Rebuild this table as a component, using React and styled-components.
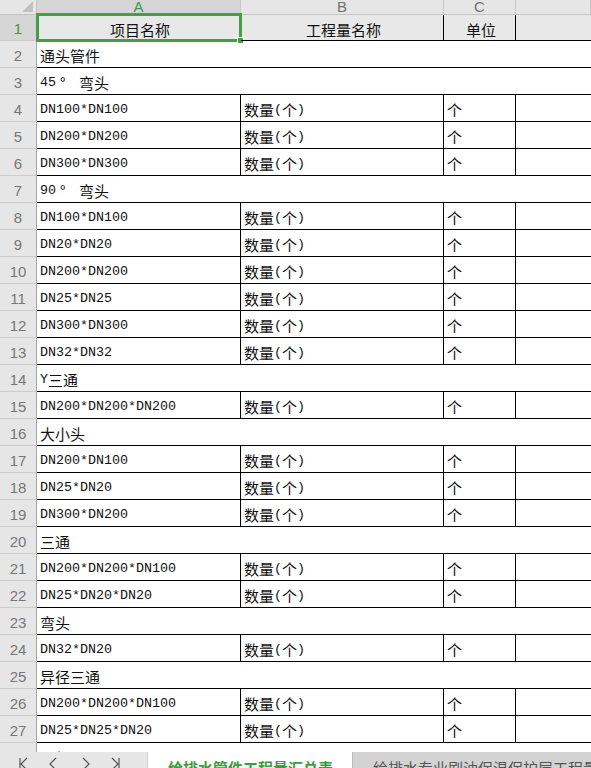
import React from "react";
import styled, { createGlobalStyle } from "styled-components";

const GlobalStyle = createGlobalStyle`
  html, body {
    margin: 0;
    padding: 0;
    background: #ffffff;
  }
`;

const COLS = "37px 204px 203px 72px 1fr";

const Page = styled.div`
  width: 591px;
  height: 768px;
  overflow: hidden;
  display: flex;
  flex-direction: column;
  background: #ffffff;
`;

const Sheet = styled.div`
  flex: 0 0 752px;
  overflow: hidden;
`;

const HeaderRow = styled.div`
  display: grid;
  grid-template-columns: ${COLS};
  height: 15px;
  box-sizing: border-box;
  background: #e6e6e6;
  border-bottom: 1px solid #c4c4c4;
`;

const Corner = styled.div`
  position: relative;
  border-right: 1px solid #c4c4c4;

  &::after {
    content: "";
    position: absolute;
    right: 3px;
    bottom: 2px;
    border-style: solid;
    border-width: 0 0 11px 11px;
    border-color: transparent transparent #c2c2c2 transparent;
  }
`;

const ColLabel = styled.div`
  font-family: "Liberation Sans", Arial, sans-serif;
  font-size: 15px;
  line-height: 13px;
  text-align: center;
  color: ${(p) => (p.active ? "#3c9a40" : "#707070")};
  background: ${(p) => (p.active ? "#d6d6d6" : "transparent")};
  border-right: 1px solid #c8c8c8;
  overflow: hidden;
`;

const Row = styled.div`
  display: grid;
  grid-template-columns: ${COLS};
  height: ${(p) => p.h}px;
  background: ${(p) => (p.head ? "#e8e8e8" : "#ffffff")};
`;

const RowNum = styled.div`
  display: flex;
  align-items: center;
  justify-content: center;
  padding-top: 2px;
  box-sizing: border-box;
  font-family: "Liberation Sans", Arial, sans-serif;
  font-size: 15px;
  color: ${(p) => (p.active ? "#3c9a40" : "#777777")};
  background: ${(p) => (p.active ? "#d6d6d6" : "#e6e6e6")};
  border-right: 1px solid #a8a8a8;
  border-bottom: 1px solid #cdcdcd;
`;

const Cell = styled.div`
  position: relative;
  display: flex;
  align-items: center;
  justify-content: ${(p) => (p.center ? "center" : "flex-start")};
  padding: 3px 0 0 3px;
  box-sizing: border-box;
  grid-column: ${(p) => (p.span ? `span ${p.span}` : "auto")};
  font-family: "Noto Sans CJK SC", sans-serif;
  font-size: 15px;
  color: #111111;
  white-space: pre;
  overflow: visible;
  border-bottom: 1px solid #000000;
  border-right: ${(p) => (p.edge ? "1px solid #000000" : "none")};
`;

const Selection = styled.div`
  position: absolute;
  left: -1px;
  top: -2px;
  right: -2px;
  bottom: -2px;
  border: 3px solid #43a047;
  pointer-events: none;

  &::after {
    content: "";
    position: absolute;
    right: -5px;
    bottom: -5px;
    width: 5px;
    height: 5px;
    background: #43a047;
    border: 1px solid #ffffff;
  }
`;

const Latin = styled.span`
  font-family: "Liberation Mono", monospace;
  font-size: 13.33px;
`;

const Degree = styled.span`
  display: inline-block;
  width: 15px;
  padding-left: 4px;
  box-sizing: border-box;
`;

const TabBar = styled.div`
  flex: 0 0 30px;
  display: flex;
  background: #ffffff;
`;

const NavBox = styled.div`
  width: 148px;
  display: flex;
  align-items: flex-start;
  justify-content: space-around;
  padding: 5px 16px 0 8px;
  box-sizing: border-box;
  background: #e6e6e6;
  border-right: 1px solid #d0d0d0;
`;

const Tab = styled.div`
  display: flex;
  align-items: flex-start;
  padding: 5px 0 0 20px;
  width: ${(p) => (p.active ? "184px" : "auto")};
  flex: ${(p) => (p.active ? "0 0 auto" : "1")};
  white-space: nowrap;
  overflow: hidden;
  font-family: "Noto Sans CJK SC", sans-serif;
  font-size: 15px;
  font-weight: ${(p) => (p.active ? 700 : 400)};
  color: ${(p) => (p.active ? "#3a9d3e" : "#555555")};
  background: ${(p) => (p.active ? "#ffffff" : "#d3d3d3")};
  border-left: ${(p) => (p.active ? "none" : "1px solid #bdbdbd")};
`;

const NavIcon = ({ d }) => (
  <svg width="12" height="14" viewBox="0 0 12 14" fill="none" stroke="#555" strokeWidth="1.2">
    <path d={d} />
  </svg>
);

const text = (s) =>
  s
    .split(/([\x20-\x7e]+|°)/)
    .filter(Boolean)
    .map((part, i) =>
      part === "°" ? (
        <Degree key={i}>°</Degree>
      ) : /^[\x20-\x7e]+$/.test(part) ? (
        <Latin key={i}>{part}</Latin>
      ) : (
        <span key={i}>{part}</span>
      )
    );

const rows = [
  ["通头管件"],
  ["45° 弯头"],
  ["DN100*DN100", 1],
  ["DN200*DN200", 1],
  ["DN300*DN300", 1],
  ["90° 弯头"],
  ["DN100*DN100", 1],
  ["DN20*DN20", 1],
  ["DN200*DN200", 1],
  ["DN25*DN25", 1],
  ["DN300*DN300", 1],
  ["DN32*DN32", 1],
  ["Y三通"],
  ["DN200*DN200*DN200", 1],
  ["大小头"],
  ["DN200*DN100", 1],
  ["DN25*DN20", 1],
  ["DN300*DN200", 1],
  ["三通"],
  ["DN200*DN200*DN100", 1],
  ["DN25*DN20*DN20", 1],
  ["弯头"],
  ["DN32*DN20", 1],
  ["异径三通"],
  ["DN200*DN200*DN100", 1],
  ["DN25*DN25*DN20", 1],
  ["异径三通"],
];

export default function App() {
  return (
    <Page>
      <GlobalStyle />
      <Sheet>
        <HeaderRow>
          <Corner />
          <ColLabel active>A</ColLabel>
          <ColLabel>B</ColLabel>
          <ColLabel>C</ColLabel>
          <ColLabel />
        </HeaderRow>

        <Row h={26} head>
          <RowNum active>1</RowNum>
          <Cell center edge>
            {text("项目名称")}
            <Selection />
          </Cell>
          <Cell center edge>{text("工程量名称")}</Cell>
          <Cell center edge>{text("单位")}</Cell>
          <Cell />
        </Row>

        {rows.map(([name, data], i) => (
          <Row h={27} key={i}>
            <RowNum>{i + 2}</RowNum>
            {data ? (
              <>
                <Cell edge>{text(name)}</Cell>
                <Cell edge>{text("数量(个)")}</Cell>
                <Cell edge>{text("个")}</Cell>
                <Cell />
              </>
            ) : (
              <Cell span={4}>{text(name)}</Cell>
            )}
          </Row>
        ))}
      </Sheet>

      <TabBar>
        <NavBox>
          <NavIcon d="M3 1v12M10 1L4 7l6 6" />
          <NavIcon d="M8 1L2 7l6 6" />
          <NavIcon d="M4 1l6 6-6 6" />
          <NavIcon d="M2 1l6 6-6 6M9 1v12" />
        </NavBox>
        <Tab active>给排水管件工程量汇总表</Tab>
        <Tab>给排水专业刷油保温保护层工程量汇总表</Tab>
      </TabBar>
    </Page>
  );
}
